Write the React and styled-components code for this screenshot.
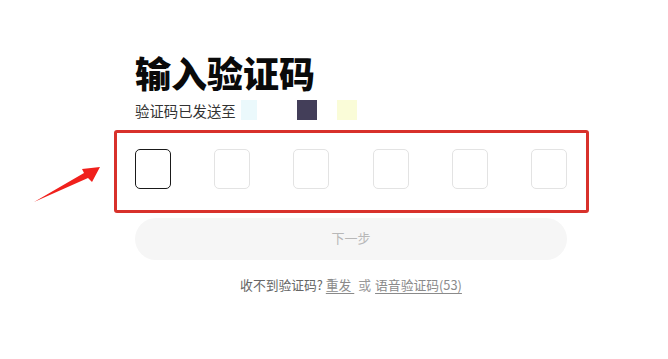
import React from "react";
import styled, { createGlobalStyle } from "styled-components";

const Global = createGlobalStyle`
  html, body { margin: 0; padding: 0; background: #ffffff; }
  body { font-family: "Noto Sans CJK SC", "Noto Sans", sans-serif; }
  * { box-sizing: border-box; }
`;

const Page = styled.div`
  position: relative;
  width: 668px;
  height: 359px;
  overflow: hidden;
  padding: 50px 0 0 135px;
`;

const Column = styled.div`
  width: 432px;
  display: flex;
  flex-direction: column;
`;

const Title = styled.h1`
  margin: 0;
  font-size: 36px;
  line-height: 44px;
  font-weight: 900;
  color: #0a0a0a;
  letter-spacing: 0;
`;

const SubRow = styled.div`
  margin-top: 6px;
  display: flex;
  align-items: center;
  height: 20px;
  font-size: 14.4px;
  color: #333;
`;

const Mask = styled.span`
  display: inline-block;
  width: ${(p) => p.$w}px;
  height: 20px;
  background: ${(p) => p.$color};
  margin-left: ${(p) => p.$gap}px;
`;

const Frame = styled.div`
  margin: 10px -22px 0 -21px;
  border: 3px solid #d8312b;
  border-radius: 3px;
  padding: 16px 19px 21px 18px;
`;

const Boxes = styled.div`
  display: flex;
  justify-content: space-between;
`;

const CodeBox = styled.div`
  width: 36px;
  height: 40px;
  border-radius: 5px;
  border: 1px solid ${(p) => (p.$active ? "#1a1a1a" : "#e3e3e3")};
  background: #fff;
`;

const NextButton = styled.button`
  margin-top: 5px;
  height: 42px;
  width: 100%;
  border: none;
  border-radius: 21px;
  background: #f6f6f6;
  color: #b8b8b8;
  font-family: inherit;
  font-size: 13px;
  line-height: 40px;
  padding: 0 0 2px;
`;

const Footer = styled.div`
  margin-top: 15px;
  text-align: center;
  font-size: 12.8px;
  line-height: 20px;
  color: #666;
`;

const Link = styled.a`
  color: #8a8a8a;
  text-decoration: underline;
  text-underline-offset: 3px;
  text-decoration-thickness: 1px;
`;

const Or = styled.span`
  color: #999;
  margin: 0 4px;
`;

const ArrowSvg = styled.svg`
  position: absolute;
  left: 0;
  top: 0;
`;

export default function App() {
  return (
    <>
      <Global />
      <Page>
        <Column>
          <Title>输入验证码</Title>
          <SubRow>
            验证码已发送至
            <Mask $color="#ebf9fc" $w={16} $gap={5} />
            <Mask $color="#433e59" $w={20} $gap={40} />
            <Mask $color="#fafcd8" $w={20} $gap={20} />
          </SubRow>
          <Frame>
            <Boxes>
              {[0, 1, 2, 3, 4, 5].map((i) => (
                <CodeBox key={i} $active={i === 0} />
              ))}
            </Boxes>
          </Frame>
          <NextButton>下一步</NextButton>
          <Footer>
            收不到验证码?&nbsp;<Link>重发&nbsp;</Link>
            <Or>或</Or>
            <Link>语音验证码(53)</Link>
          </Footer>
        </Column>
        <ArrowSvg width="120" height="220" viewBox="0 0 120 220">
          <polygon
            points="34,202 84,173 82,169 100,167 92,182 88,178"
            fill="#f0201c"
          />
        </ArrowSvg>
      </Page>
    </>
  );
}
